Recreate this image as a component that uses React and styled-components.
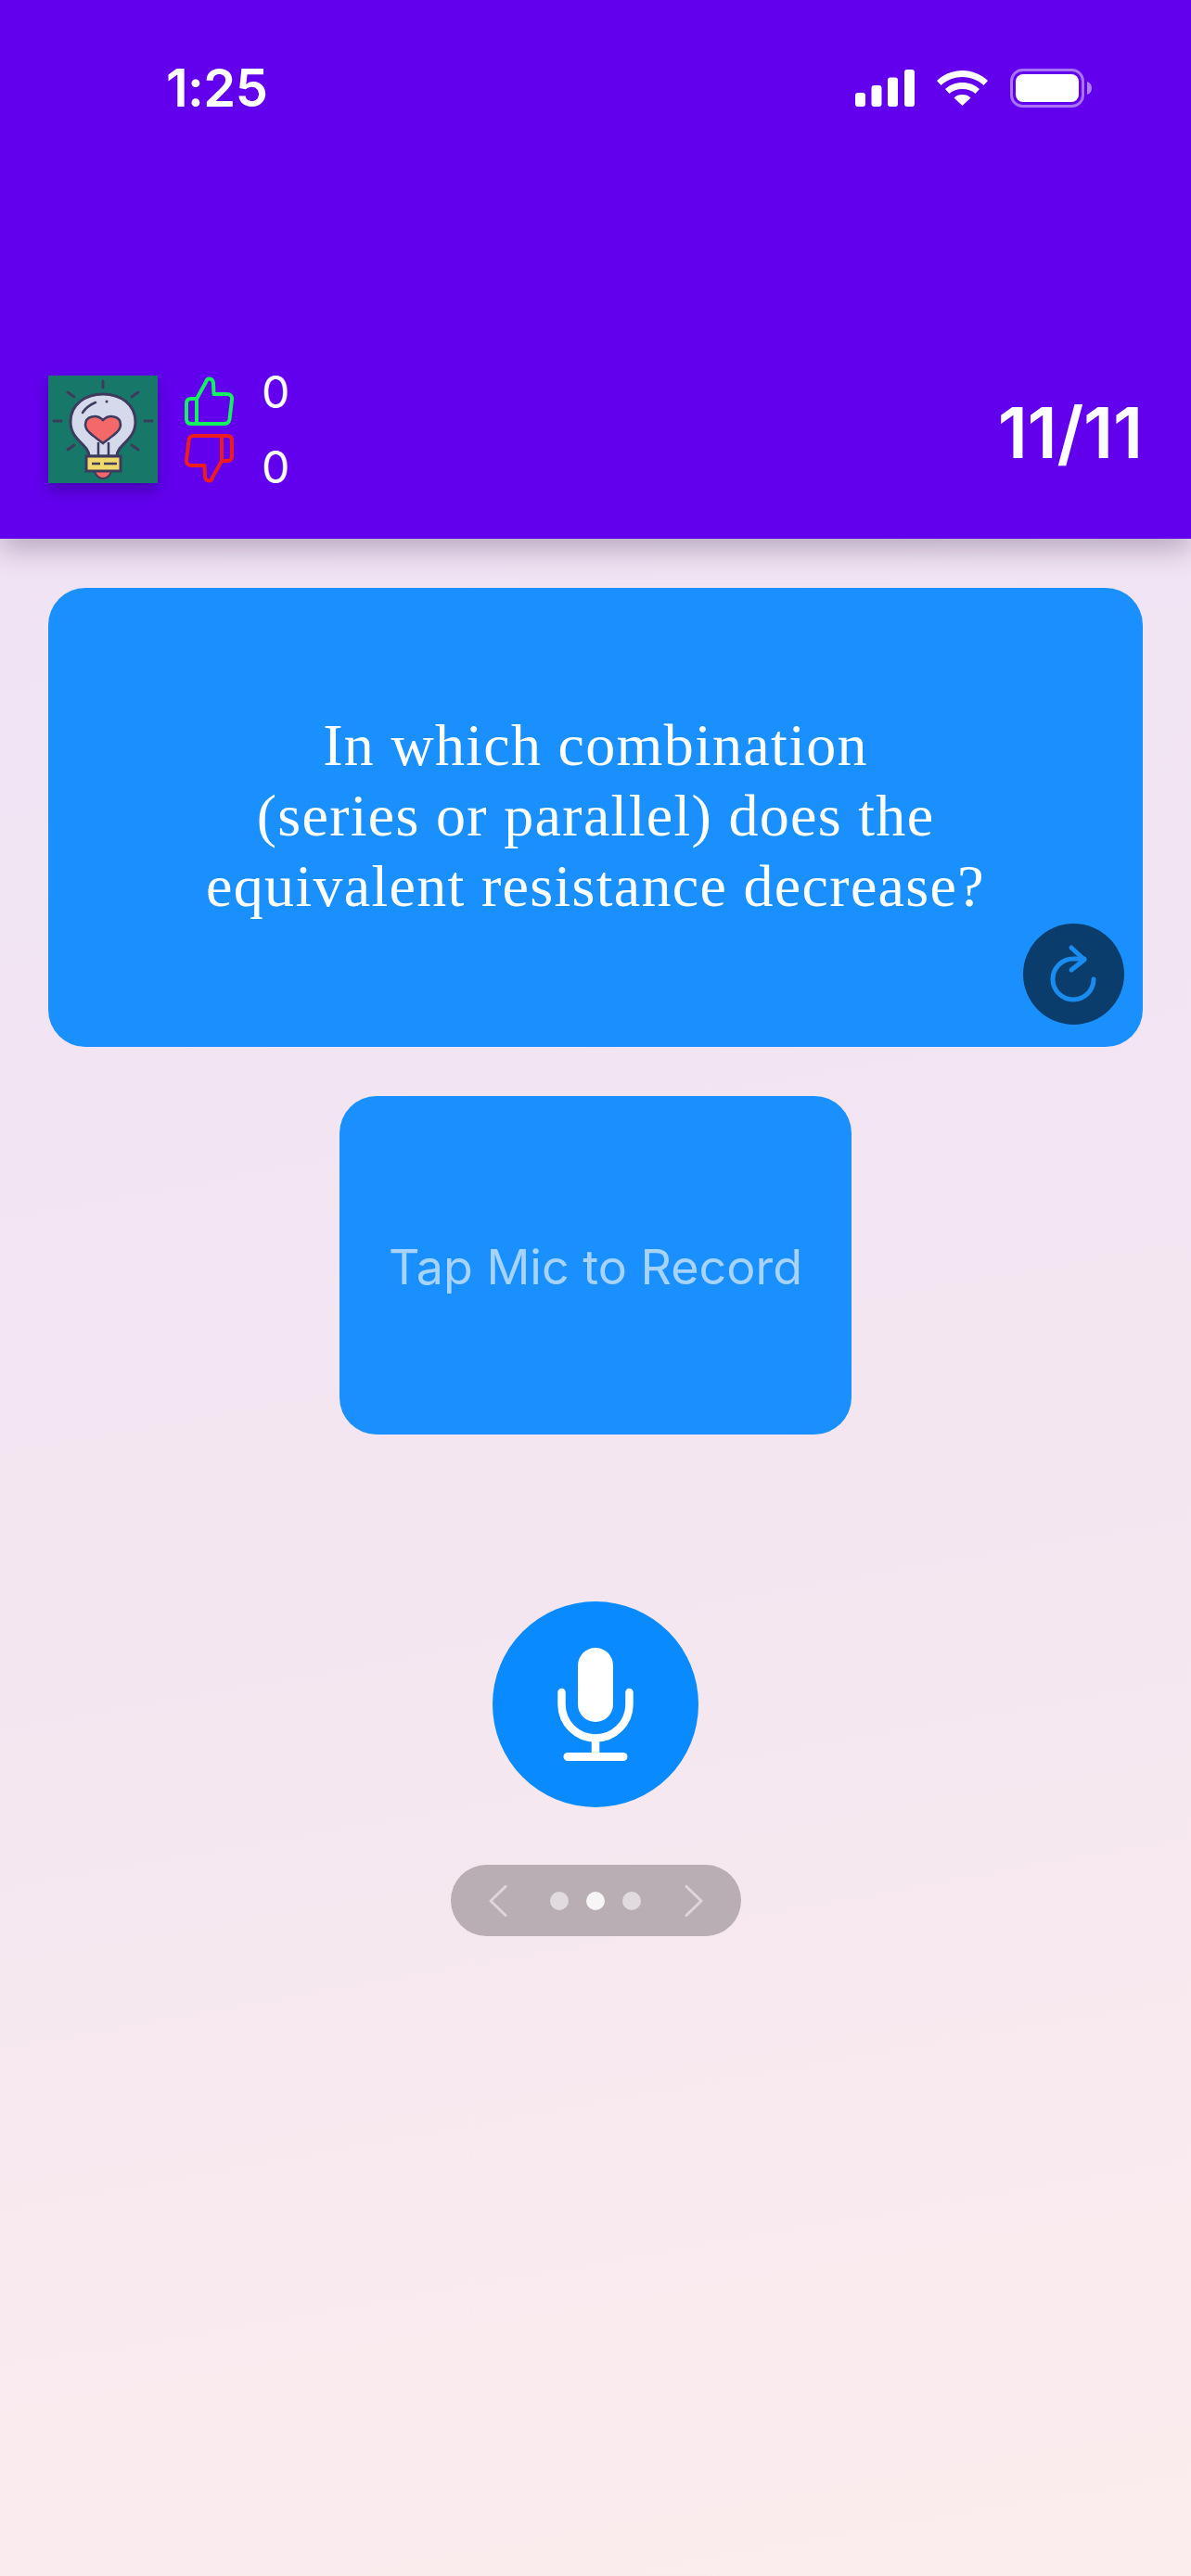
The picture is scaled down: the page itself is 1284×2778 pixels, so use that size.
import React from "react";
import styled, { createGlobalStyle } from "styled-components";

const GlobalStyle = createGlobalStyle`
  html, body {
    margin: 0;
    padding: 0;
  }
  body {
    font-family: "Inter", "Liberation Sans", sans-serif;
  }
`;

const Page = styled.div`
  width: 1284px;
  min-height: 2778px;
  display: flex;
  flex-direction: column;
  background: linear-gradient(170deg, #f0e3f4 20%, #f4e6f0 60%, #fbeded 100%);
`;

/* top bar */
const Header = styled.header`
  height: 581px;
  box-sizing: border-box;
  padding: 74px 52px 60px;
  display: flex;
  flex-direction: column;
  justify-content: space-between;
  background: #6200ee;
  box-shadow: 0 10px 30px rgba(40, 20, 60, 0.3);
`;

const StatusBar = styled.div`
  display: flex;
  align-items: center;
  justify-content: space-between;
  height: 42px;
  padding: 0 55px 0 127px;
`;

const Clock = styled.span`
  font-size: 56px;
  font-weight: 600;
  line-height: 42px;
  letter-spacing: -0.6px;
  color: #fff;
`;

const StatusIcons = styled.div`
  display: flex;
  align-items: center;
  gap: 24px;
`;

const StatsRow = styled.div`
  display: flex;
  align-items: center;
`;

const Logo = styled.svg`
  width: 118px;
  height: 116px;
  flex-shrink: 0;
  filter: blur(0.5px);
  box-shadow: 0 8px 14px rgba(40, 0, 110, 0.45);
`;

const Thumbs = styled.div`
  display: flex;
  flex-direction: column;
  gap: 9px;
  margin-left: 29px;
`;

const Counts = styled.div`
  display: flex;
  flex-direction: column;
  gap: 46px;
  margin-left: 30px;
`;

const Count = styled.span`
  font-size: 48px;
  line-height: 35px;
  color: #fff;
`;

const Progress = styled.span`
  margin-left: auto;
  padding-top: 6px;
  font-size: 76px;
  font-weight: 600;
  letter-spacing: -0.2px;
  color: #fff;
`;

/* cards */
const Content = styled.main`
  display: flex;
  flex-direction: column;
  align-items: center;
  padding: 53px 52px 0;
`;

const QuestionCard = styled.section`
  position: relative;
  width: 100%;
  height: 495px;
  box-sizing: border-box;
  padding-bottom: 4px;
  display: flex;
  align-items: center;
  justify-content: center;
  border-radius: 40px;
  background: #1a90ff;
`;

const QuestionText = styled.p`
  margin: 0;
  font-family: "Liberation Serif", serif;
  font-size: 64px;
  line-height: 76px;
  letter-spacing: 1.3px;
  text-align: center;
  color: #fff;
`;

const ReplayButton = styled.button`
  position: absolute;
  right: 20px;
  bottom: 24px;
  width: 109px;
  height: 109px;
  padding: 0;
  border: 0;
  border-radius: 50%;
  background: #0a3d6b;
  display: flex;
`;

const AnswerCard = styled.section`
  width: 552px;
  height: 365px;
  margin-top: 53px;
  box-sizing: border-box;
  padding-top: 3px;
  display: flex;
  align-items: center;
  justify-content: center;
  border-radius: 40px;
  background: #1a90ff;
  font-size: 52px;
  color: #a6d3ff;
`;

const MicButton = styled.button`
  width: 222px;
  height: 222px;
  margin-top: 180px;
  padding: 0;
  border: 0;
  border-radius: 50%;
  background: #0a8aff;
  display: flex;
`;

const Pager = styled.nav`
  width: 313px;
  height: 77px;
  margin-top: 62px;
  box-sizing: border-box;
  padding: 0 41px;
  display: flex;
  align-items: center;
  justify-content: space-between;
  border-radius: 39px;
  background: #b9aeb4;
`;

const Dots = styled.div`
  display: flex;
  gap: 19px;
`;

const Dot = styled.span`
  width: 20px;
  height: 20px;
  border-radius: 50%;
  background: ${(p) => (p.$active ? "#f7f5f6" : "#e1dbdf")};
`;

const Signal = () => (
  <svg width="64" height="40" viewBox="0 0 64 40" fill="#fff">
    <rect x="0" y="25" width="11" height="15" rx="3" />
    <rect x="17.5" y="17" width="11" height="23" rx="3" />
    <rect x="35" y="8.5" width="11" height="31.5" rx="3" />
    <rect x="53" y="0" width="11" height="40" rx="3" />
  </svg>
);

const Wifi = () => (
  <svg width="55" height="38" viewBox="0 0 55 38" fill="#fff">
    <path d="M27.5 0C17 0 7.5 4 0 11l4.5 5C10.5 10.5 18.5 7 27.5 7s17 3.500 23 9l4.500-5C47.500 4 38 0 27.500 0z" />
    <path d="M27.500 13C20.500 13 14 15.500 9 20l4.500 5c3.700-3.300 8.500-5 14-5s10.300 1.700 14 5L46 20c-5-4.500-11.500-7-18.500-7z" />
    <path d="M27.500 26c-3.500 0-6.800 1.200-9 3.400L27.500 38l9-8.600C34.300 27.200 31 26 27.500 26z" />
  </svg>
);

const Battery = () => (
  <svg width="88" height="42" viewBox="0 0 88 42" fill="none">
    <rect x="1.500" y="1.500" width="77" height="39" rx="12" stroke="#fff" strokeOpacity="0.45" strokeWidth="3" />
    <rect x="6" y="6" width="68" height="30" rx="8" fill="#fff" />
    <path d="M83 14c3 1 5 3.500 5 7s-2 6-5 7z" fill="#fff" fillOpacity="0.5" />
  </svg>
);

const THUMB_PATH =
  "M13 24 L23 6 C24 1.500 30 1 31 7 L31.500 19 L46 19 C49.500 19 51.500 21.500 51 25 L48.500 46 C48 49.500 46 51 43 51 L7 51 C3.500 51 2 49 2 46 L2 29 C2 26 3.500 24 7 24 L13 24 L13 51";

const Thumb = ({ color, down }) => (
  <svg
    width="53"
    height="53"
    viewBox="0 0 53 53"
    fill="none"
    stroke={color}
    strokeWidth="4"
    strokeLinejoin="round"
    style={down ? { transform: "rotate(180deg)" } : undefined}
  >
    <path d={THUMB_PATH} />
  </svg>
);

const BulbLogo = () => (
  <Logo viewBox="0 0 118 116">
    <rect width="118" height="116" fill="#17786a" />
    <g stroke="#3d3a5e" strokeWidth="3" strokeLinecap="round" fill="none">
      <path d="M59 6v7M6 49h8M104 49h8M21 18l7 5M97 18l-7 5M21 80l7-5M97 80l-7-5" />
    </g>
    <path
      d="M44 87 C44 74 24 70 24 50 C24 31 40 20 59 20 C78 20 94 31 94 50 C94 70 74 74 74 87z"
      fill="#d5d9ec"
      stroke="#3d3a5e"
      strokeWidth="3"
    />
    <path d="M37 40 C41 34 46 31 51 29" stroke="#3d3a5e" strokeWidth="2.500" strokeLinecap="round" fill="none" />
    <circle cx="63" cy="28" r="1.500" fill="#3d3a5e" />
    <path d="M54 72v15M65 72v15" stroke="#3d3a5e" strokeWidth="2.500" fill="none" />
    <path
      d="M59 73 C52 67 40 61 40 53 C40 44 52 41 59 48 C66 41 78 44 78 53 C78 61 66 67 59 73z"
      fill="#f4686a"
      stroke="#3d3a5e"
      strokeWidth="2.500"
    />
    <path d="M50 103 h18 c-1 5 -5 8 -9 8 s-8 -3 -9 -8z" fill="#f4686a" stroke="#3d3a5e" strokeWidth="2" />
    <rect x="41" y="87" width="37" height="16" fill="#efd96a" stroke="#3d3a5e" strokeWidth="3" />
    <path d="M47 95h9M60 95h14" stroke="#3d3a5e" strokeWidth="2.500" />
  </Logo>
);

const ReplayIcon = () => (
  <svg width="109" height="109" viewBox="0 0 109 109" fill="none" stroke="#1a8cf0" strokeWidth="5" strokeLinecap="round" strokeLinejoin="round">
    <path d="M76 60a22 22 0 1 1-22-22h12" />
    <path d="M52 26l14 13-14 11" />
  </svg>
);

const MicIcon = () => (
  <svg width="222" height="222" viewBox="0 0 222 222" fill="none" stroke="#fff" strokeLinecap="round">
    <rect x="92" y="50" width="38" height="80" rx="19" fill="#fff" stroke="none" />
    <path d="M74.500 98v13a36.500 36.500 0 0 0 73 0V98" strokeWidth="8.500" />
    <path d="M111 148v19" strokeWidth="8.500" strokeLinecap="butt" />
    <path d="M81 167.500h60" strokeWidth="9" />
  </svg>
);

const Chevron = ({ left }) => (
  <svg width="20" height="34" viewBox="0 0 20 34" fill="none" stroke="#ddd6da" strokeWidth="3" strokeLinecap="round" strokeLinejoin="round">
    <path d={left ? "M18 1.500 L2 17 L18 32.500" : "M2 1.500 L18 17 L2 32.500"} />
  </svg>
);

export default function App() {
  return (
    <Page>
      <GlobalStyle />
      <Header>
        <StatusBar>
          <Clock>1:25</Clock>
          <StatusIcons>
            <Signal />
            <Wifi />
            <Battery />
          </StatusIcons>
        </StatusBar>
        <StatsRow>
          <BulbLogo />
          <Thumbs>
            <Thumb color="#14f15e" />
            <Thumb color="#ee1c1c" down />
          </Thumbs>
          <Counts>
            <Count>0</Count>
            <Count>0</Count>
          </Counts>
          <Progress>11/11</Progress>
        </StatsRow>
      </Header>
      <Content>
        <QuestionCard>
          <QuestionText>
            In which combination
            <br />
            (series or parallel) does the
            <br />
            equivalent resistance decrease?
          </QuestionText>
          <ReplayButton>
            <ReplayIcon />
          </ReplayButton>
        </QuestionCard>
        <AnswerCard>Tap Mic to Record</AnswerCard>
        <MicButton>
          <MicIcon />
        </MicButton>
        <Pager>
          <Chevron left />
          <Dots>
            <Dot />
            <Dot $active />
            <Dot />
          </Dots>
          <Chevron />
        </Pager>
      </Content>
    </Page>
  );
}
